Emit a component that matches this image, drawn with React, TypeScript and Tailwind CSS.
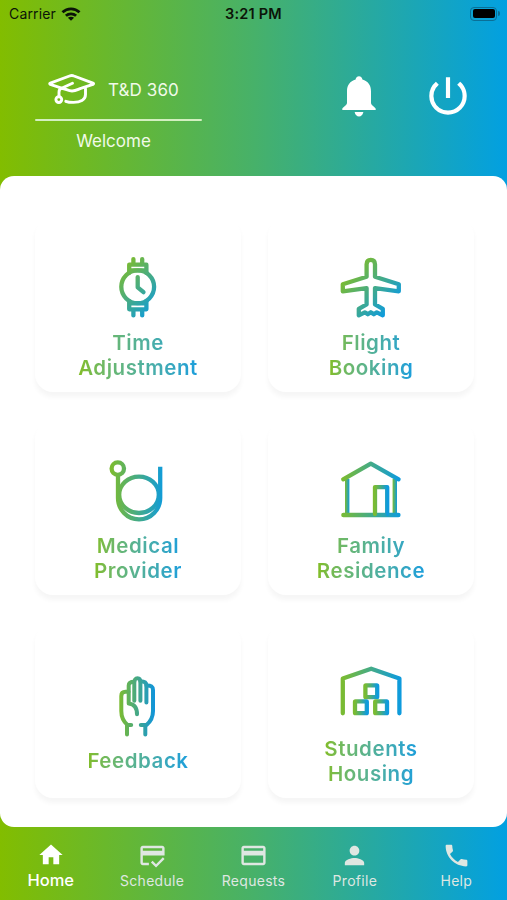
import type { ReactNode } from "react";
import { MdCreditCard, MdCreditScore, MdHome, MdPerson, MdPhone, MdPowerSettingsNew } from "react-icons/md";

const Gradient = ({ id, diagonal = false }: { id: string; diagonal?: boolean }) => (
  <linearGradient
    id={id}
    gradientUnits="userSpaceOnUse"
    x1={diagonal ? 10 : 4}
    y1={diagonal ? 14 : 0}
    x2={diagonal ? 50 : 56}
    y2={diagonal ? 50 : 0}
  >
    <stop stopColor="#7abb32" />
    <stop offset="1" stopColor="#0e9bdd" />
  </linearGradient>
);

// gradient that restarts on every shape
const ShapeGradient = ({ id }: { id: string }) => (
  <linearGradient id={id}>
    <stop stopColor="#7abb32" />
    <stop offset="1" stopColor="#0e9bdd" />
  </linearGradient>
);

const Icon = ({ color, children }: { color: string; children: ReactNode }) => (
  <svg
    width="60"
    height="60"
    viewBox="0 0 60 60"
    fill="none"
    stroke={color}
    strokeWidth="4.3"
    strokeLinecap="round"
    strokeLinejoin="round"
    className="shrink-0 overflow-visible"
  >
    {children}
  </svg>
);

const WatchIcon = () => (
  <Icon color="url(#watch)">
    <Gradient id="watch" diagonal />
    <circle cx="29.7" cy="28.8" r="16.4" />
    <path d="M25.4 1.1V6.1M34.2 1.1V6.1M21.2 15.1V6.7H38.4V15.1M23 12.4H37M25.4 57.4V52.1M34.2 57.4V52.1M21.2 43.1V51.3H38.4V43.1M23 45.4H37" />
    <path d="M29.7 19.1V29.3L35.5 34.1" />
  </Icon>
);

const PlaneIcon = () => (
  <Icon color="url(#plane)">
    <Gradient id="plane" diagonal />
    <path d="M25.6 18.8V6.3C25.6 3.5 27.3 1.9 29.8 1.9S34 3.5 34 6.3V18.8L57.8 26.3V33.3L34 30.1V46.4L41.8 50.8V57.3L35.8 54.3L32.8 56.3L29.8 54.3L26.8 56.3L23.8 54.3L17.8 57.3V50.8L25.6 46.4V30.1L1.8 33.3V26.3Z" />
  </Icon>
);

const StethoscopeIcon = () => (
  <Icon color="url(#stethoscope)">
    <Gradient id="stethoscope" />
    <circle cx="9.8" cy="7.6" r="6.2" />
    <path d="M10 14V37C10 48.5 19 58.4 31 58.4S52.2 48.5 52.2 37V5.8" strokeLinecap="butt" />
    <ellipse cx="31" cy="33.8" rx="19.8" ry="18.2" />
  </Icon>
);

const HouseIcon = () => (
  <Icon color="url(#house)">
    <ShapeGradient id="house" />
    <g fill="url(#house)" stroke="none">
      <rect x="4" y="18" width="4.4" height="35" />
      <rect x="51.6" y="18" width="4.4" height="35" />
      <rect x="0.2" y="51.8" width="59.4" height="4.4" rx="2.2" />
    </g>
    <path d="M2.2 18.3L29.8 2.7L57.6 18.3" />
    <path d="M34 53V26.1H46.2V53" />
  </Icon>
);

const HandIcon = () => (
  <Icon color="url(#hand)">
    <linearGradient id="hand" gradientUnits="userSpaceOnUse" x1="12" y1="0" x2="47" y2="0">
      <stop stopColor="#7abb32" />
      <stop offset="1" stopColor="#0e94dd" />
    </linearGradient>
    <g strokeWidth="4">
      <path d="M19 58.6V49H23.2M19.5 49C15.5 45.5 13.3 41.5 13.3 35V20C13.3 17.5 14.8 15.8 17.5 15.8H20.5" />
      <path d="M29 38.3C29 32 26 28 20.7 27.5V9.5C20.7 7.2 22.3 5.8 26.3 5.8" />
      <path d="M26.3 24.8V6.5C26.3 3.8 27.5 2.2 29.5 2.2S32.4 3.8 32.4 6.5V24.8" />
      <path d="M32.4 5.2C36.5 5.2 38.4 6.5 38.4 9.5V26.5" />
      <path d="M38.4 9.5C43 9.3 45 10.8 45 14V35C45 41.5 42.6 45.5 38.5 49M32.8 49H37.3V58.6" />
    </g>
  </Icon>
);

const HousingIcon = () => (
  <Icon color="url(#housing)">
    <ShapeGradient id="housing" />
    <path d="M1.8 49.3V14.5L30.2 4.7L58.4 14.5V49.3" />
    <rect x="24.4" y="21.4" width="11.8" height="11.8" rx="0.5" />
    <rect x="14" y="37.4" width="11.8" height="11.8" rx="0.5" />
    <rect x="34.2" y="37.4" width="11.8" height="11.8" rx="0.5" />
  </Icon>
);

const CapIcon = () => (
  <svg width="48" height="32" viewBox="0 0 48 32" fill="none" stroke="#fff" strokeWidth="2.9" strokeLinecap="round" strokeLinejoin="round" className="shrink-0">
    <path d="M13.5 15.2L2.3 11.4C1.5 11 1.5 10.5 2.3 10.2L21.5 3C23 2.4 24.6 2.4 26 3L45 10.2C45.8 10.5 45.8 11 45 11.4L33.5 15.2C30 16.2 28.5 18 24 18C20 18 18 15.8 13.5 15.2" />
    <path d="M24.5 10.3L13.5 15.2C11.5 16 11 17.2 11 19.2V23" />
    <circle cx="10.8" cy="26.6" r="2.9" />
    <path d="M37.5 15.8V21.5C37.5 27 32 29.4 25.5 29.4C22.5 29.4 20 29.2 17.8 28.3" />
  </svg>
);

const BellIcon = () => (
  <svg width="34" height="41" viewBox="0 0 34 41" fill="#fff">
    <path d="M17 0.3C18.9 0.3 20.2 1.6 20.4 3.6C26 5.2 29 9.2 29 15.2V27C29 29.3 33.7 31.2 33.7 33V34H0.3V33C0.3 31.2 5 29.3 5 27V15.2C5 9.2 8 5.2 13.6 3.6C13.8 1.6 15.1 0.3 17 0.3Z" />
    <path d="M12.6 36H21.4C20.7 39 19.2 40.4 17 40.4S13.3 39 12.6 36Z" />
  </svg>
);

const WifiIcon = () => (
  <svg width="20" height="14" viewBox="0 0 20 14" fill="none" stroke="#0b1408" strokeWidth="2.8">
    <path d="M1.5 5.3C6.3 0.7 13.7 0.7 18.5 5.3M4.9 8.8C7.8 6.1 12.2 6.1 15.1 8.8" />
    <path d="M10 13.7L6.9 10.8C8.7 9.3 11.3 9.3 13.1 10.8Z" fill="#0b1408" stroke="none" />
  </svg>
);

const services = [
  { lines: ["Time", "Adjustment"], icon: WatchIcon },
  { lines: ["Flight", "Booking"], icon: PlaneIcon },
  { lines: ["Medical", "Provider"], icon: StethoscopeIcon },
  { lines: ["Family", "Residence"], icon: HouseIcon },
  { lines: ["Feedback"], icon: HandIcon },
  { lines: ["Students", "Housing"], icon: HousingIcon },
];

const tabs = [
  { label: "Home", icon: MdHome, active: true },
  { label: "Schedule", icon: MdCreditScore },
  { label: "Requests", icon: MdCreditCard },
  { label: "Profile", icon: MdPerson },
  { label: "Help", icon: MdPhone },
];

const StatusBar = () => (
  <div className="grid h-[27px] grid-cols-3 items-center pl-[9px] pr-[7px] text-[14px] text-[#0b1408]">
    <div className="flex items-center gap-[5px]">
      <span className="tracking-[0.15px]">Carrier</span>
      <WifiIcon />
    </div>
    <span className="-ml-[2px] text-center text-[14.5px] font-semibold tracking-[0.2px]">3:21 PM</span>
    <div className="flex items-center justify-end gap-px">
      <div className="h-[14px] w-[27px] rounded-[4px] border border-[#0a6f97] p-[1.5px]">
        <div className="h-full rounded-[2px] bg-black" />
      </div>
      <div className="h-[5px] w-[2px] rounded-r-full bg-[#0a6f97]" />
    </div>
  </div>
);

const Header = () => (
  <header className="flex h-[148.5px] justify-between pl-[35px] pr-[34px] text-white">
    <div className="flex w-[167px] flex-col items-center pt-[46px]">
      <div className="flex w-full items-center gap-3 pl-[13px]">
        <CapIcon />
        <span className="whitespace-nowrap pt-px text-[17px] leading-[30px] tracking-[0.1px] text-[#f1fae9]">T&amp;D 360</span>
      </div>
      <div className="mt-[14px] h-[2px] w-full rounded-full bg-[#d3efc0]" />
      <span className="-ml-[10px] mt-[8px] text-[17px] leading-6 text-[#f1fae9]">Welcome</span>
    </div>
    <div className="flex items-start gap-[47px] pt-[44px]">
      <div className="pt-[5px]">
        <BellIcon />
      </div>
      <MdPowerSettingsNew size={50} />
    </div>
  </header>
);

const App = () => {
  return (
    <div className="flex h-[900px] w-[507px] flex-col overflow-hidden bg-linear-to-r from-[#82bd00] via-[#47b169] to-[#02a0e1] [--tw-gradient-position:to_right_in_srgb] font-['Inter',sans-serif]">
      <StatusBar />
      <Header />

      <main className="grid h-[651px] grid-cols-[206px_206px] grid-rows-[175px_175px_175px] content-start gap-x-[27px] gap-y-[28px] rounded-[14px] bg-white pl-[35px] pt-[41.5px]">
        {services.map(({ lines, icon: ServiceIcon }) => (
          <div
            key={lines.join(" ")}
            className="flex flex-col items-center justify-center gap-[13px] rounded-[18px] bg-white pt-[29px] shadow-[0_5px_5px_0_rgba(0,0,0,0.04)]"
          >
            <ServiceIcon />
            <h2 className="bg-linear-to-r from-[#82bd20] to-[#1a9edc] bg-clip-text text-center text-[20.5px] font-semibold leading-[24.5px] tracking-[0.55px] text-transparent">
              {lines.map((line) => (
                <span key={line} className="block">
                  {line}
                </span>
              ))}
            </h2>
          </div>
        ))}
      </main>

      <nav className="grid h-[73.5px] grid-cols-5">
        {tabs.map(({ label, icon: TabIcon, active }) => (
          <div
            key={label}
            className={active ? "flex flex-col items-center pt-[14px] text-white" : "flex flex-col items-center pt-[14px] text-[#dfe7e2]"}
          >
            <TabIcon size={active ? 28 : 29} />
            <span
              className={
                active
                  ? "-mt-px text-[16.5px] font-medium leading-6"
                  : "-mt-px text-[14px] leading-6 tracking-[0.3px]"
              }
            >
              {label}
            </span>
          </div>
        ))}
      </nav>
    </div>
  );
};

export default App;
